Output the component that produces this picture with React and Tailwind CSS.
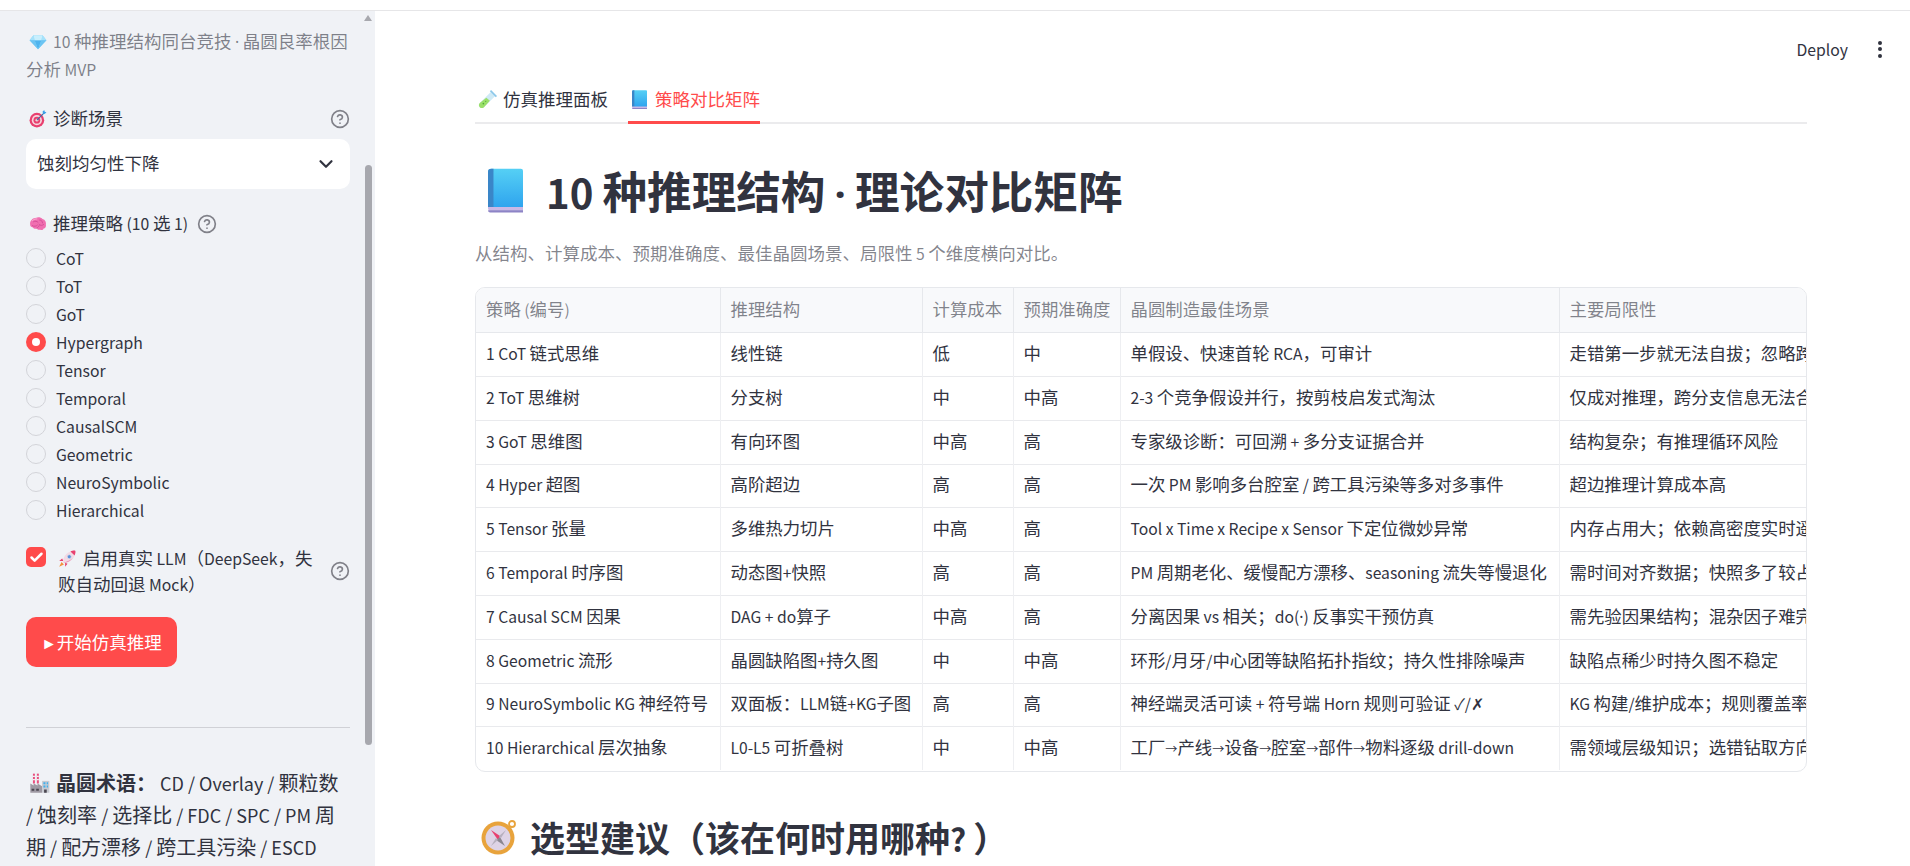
import React from "react";
import { CircleHelp, ChevronDown, Check } from "lucide-react";

const T = ({ children }) =>
  String(children)
    .split(/([\u0000-\u007f✓✗►]+|·|→)/)
    .map((part, i) => {
      if (i % 2 === 0) return part;
      if (part === "·")
        return (
          <span key={i} className="font-['Noto_Sans',sans-serif] text-[0.9em] leading-none">
            {part}
          </span>
        );
      if (part === "→")
        return (
          <span key={i} className="text-[0.7em] leading-none">
            {part}
          </span>
        );
      return (
        <span key={i} className="text-[0.9em] leading-none">
          {part}
        </span>
      );
    });

const Diamond = ({ className }) => (
  <svg viewBox="0 0 32 32" className={className}>
    <path d="M8 4h16l7 9-15 16L1 13z" fill="#7fd0f7" />
    <path d="M8 4l-7 9h9zM24 4l7 9h-9z" fill="#a5e2fb" />
    <path d="M10 13h12l-6 16z" fill="#4fb4ee" />
    <path d="M8 4h16l-2 9H10z" fill="#c9effd" />
    <path d="M1 13h9l6 16zM31 13h-9l-6 16z" fill="#6cc4f2" />
  </svg>
);
const Target = ({ className }) => (
  <svg viewBox="0 0 32 32" className={className}>
    <circle cx="14" cy="18" r="13" fill="#e8406f" />
    <circle cx="14" cy="18" r="9" fill="#f7d5dd" />
    <circle cx="14" cy="18" r="6" fill="#e8406f" />
    <circle cx="14" cy="18" r="2.5" fill="#f7d5dd" />
    <path d="M14 18L27 5" stroke="#3a6ea8" strokeWidth="2" />
    <path d="M24 3l1 3 3 1 3-3-3-1-1-3z" fill="#3aa0ea" />
  </svg>
);
const Brain = ({ className }) => (
  <svg viewBox="0 0 32 32" className={className}>
    <path d="M2 17C1 10 7 5 13 5c2-2 9-1 11 2 5 1 7 6 6 10 1 4-1 7-4 7-1 3-4 3-6 2-3 1-5 0-6-2-3 1-6 0-7-2-3 0-5-2-5-5z" fill="#f06fb0" />
    <path d="M8 12c3-2 6-1 8 1M19 9c3 0 5 2 5 5M6 19c3 2 7 1 9-1M18 17c2 2 6 2 8 0M14 23c2-1 3-2 4-4" stroke="#d34b95" strokeWidth="1.6" fill="none" strokeLinecap="round" />
    <path d="M6 10c3-3 6-3 8-3" stroke="#fbb3d6" strokeWidth="1.6" fill="none" strokeLinecap="round" />
  </svg>
);
const Rocket = ({ className }) => (
  <svg viewBox="0 0 32 32" className={className}>
    <path d="M6 22l-4 8 8-4z" fill="#f4903c" />
    <path d="M7 16l-5 4 7 0zM16 25l-4 5 0-7z" fill="#e8406f" />
    <path d="M9 23c-2-5 2-15 12-19 3-1 7-2 8-1 1 1 0 5-1 8-4 10-14 14-19 12z" fill="#f3d9e4" />
    <path d="M21 4c3-1 7-2 8-1 1 1 0 5-1 8z" fill="#e8406f" />
    <circle cx="19" cy="13" r="3.4" fill="#5b8fd8" stroke="#d9dfe8" strokeWidth="1.3" />
    <path d="M9 23c4 1 12-2 16-8-5 4-11 7-16 8z" fill="#e58bb0" />
  </svg>
);
const Factory = ({ className }) => (
  <svg viewBox="0 0 32 32" className={className}>
    <rect x="6" y="1" width="3" height="15" fill="#e8507f" />
    <rect x="12" y="1" width="3" height="15" fill="#e8507f" />
    <path d="M6 4h3v2H6zM12 4h3v2h-3zM6 9h3v2H6zM12 9h3v2h-3z" fill="#f2f2f4" />
    <path d="M2 30V16l5 3 0-3 6 3 0-3 7 4v10z" fill="#9e99a3" />
    <rect x="20" y="12" width="11" height="18" fill="#c6c9d1" />
    <path d="M22 14h3v3h-3zM27 14h2v3h-2zM22 19h3v3h-3zM27 19h2v3h-2z" fill="#3fb0ee" />
    <path d="M4 24h4v3H4zM11 24h4v3h-4zM23 25h4v5h-4z" fill="#4a4650" />
  </svg>
);
const TestTube = ({ className }) => (
  <svg viewBox="0 0 32 32" className={className}>
    <path d="M22 3l7 7L10 29c-2 2-5 2-7 0s-2-5 0-7z" fill="#cfeaf6" />
    <path d="M14 13l6 5-10 11c-2 2-5 2-7 0s-2-5 0-7z" fill="#9be06a" />
    <circle cx="9" cy="23" r="1.4" fill="#4fa83c" />
    <circle cx="13" cy="19" r="1" fill="#4fa83c" />
    <path d="M20 2l10 10 2-2L22 0z" fill="#8cc8ea" />
  </svg>
);
const Book = ({ className }) => (
  <svg viewBox="0 0 32 40" className={className}>
    <defs>
      <linearGradient id="bk" x1="0" y1="0" x2="0" y2="1">
        <stop offset="0" stopColor="#55d0f5" />
        <stop offset="1" stopColor="#2ea3ee" />
      </linearGradient>
    </defs>
    <path d="M3 0h27a2 2 0 0 1 2 2v34H0V3a3 3 0 0 1 3-3z" fill="url(#bk)" />
    <path d="M0 3a3 3 0 0 1 3-3h2v36H0z" fill="#3a86c8" />
    <path d="M0 35h32v3.5H2.5A2.5 2.5 0 0 1 0 36z" fill="#c9b8e6" />
    <path d="M0 38h32v2H2a2 2 0 0 1-2-2z" fill="#8d84c6" />
  </svg>
);
const Compass = ({ className }) => (
  <svg viewBox="0 0 36 36" className={className}>
    <circle cx="31" cy="5" r="3" fill="none" stroke="#e8a33c" strokeWidth="1.8" />
    <circle cx="17" cy="19" r="16.5" fill="#e8a33c" />
    <circle cx="17" cy="19" r="12.5" fill="#ded3e6" />
    <path d="M10 11l9 6-2 4z" fill="#e8406f" />
    <path d="M24 27l-9-6 4-3z" fill="#8a8690" />
    <path d="M25 11l-7 6 2 2zM10 27l7-6-2-2z" fill="#b7b0bf" />
  </svg>
);

const Help = ({ className = "" }) => (
  <CircleHelp size={20} strokeWidth={2} className={`text-[#808189] shrink-0 ${className}`} />
);

const strategies = ["CoT", "ToT", "GoT", "Hypergraph", "Tensor", "Temporal", "CausalSCM", "Geometric", "NeuroSymbolic", "Hierarchical"];

const headers = ["策略 (编号)", "推理结构", "计算成本", "预期准确度", "晶圆制造最佳场景", "主要局限性"];
const rows = [
  ["1 CoT 链式思维", "线性链", "低", "中", "单假设、快速首轮 RCA\uFF0C可审计", "走错第一步就无法自拔\uFF1B忽略跨分支证据"],
  ["2 ToT 思维树", "分支树", "中", "中高", "2-3 个竞争假设并行\uFF0C按剪枝启发式淘汰", "仅成对推理\uFF0C跨分支信息无法合并"],
  ["3 GoT 思维图", "有向环图", "中高", "高", "专家级诊断\uFF1A可回溯 + 多分支证据合并", "结构复杂\uFF1B有推理循环风险"],
  ["4 Hyper 超图", "高阶超边", "高", "高", "一次 PM 影响多台腔室 / 跨工具污染等多对多事件", "超边推理计算成本高"],
  ["5 Tensor 张量", "多维热力切片", "中高", "高", "Tool x Time x Recipe x Sensor 下定位微妙异常", "内存占用大\uFF1B依赖高密度实时遥测数据"],
  ["6 Temporal 时序图", "动态图+快照", "高", "高", "PM 周期老化、缓慢配方漂移、seasoning 流失等慢退化", "需时间对齐数据\uFF1B快照多了较占存储"],
  ["7 Causal SCM 因果", "DAG + do算子", "中高", "高", "分离因果 vs 相关\uFF1Bdo(·) 反事实干预仿真", "需先验因果结构\uFF1B混杂因子难完全排除"],
  ["8 Geometric 流形", "晶圆缺陷图+持久图", "中", "中高", "环形/月牙/中心团等缺陷拓扑指纹\uFF1B持久性排除噪声", "缺陷点稀少时持久图不稳定"],
  ["9 NeuroSymbolic KG 神经符号", "双面板\uFF1ALLM链+KG子图", "高", "高", "神经端灵活可读 + 符号端 Horn 规则可验证 ✓/✗", "KG 构建/维护成本\uFF1B规则覆盖率有限"],
  ["10 Hierarchical 层次抽象", "L0-L5 可折叠树", "中", "中高", "工厂→产线→设备→腔室→部件→物料逐级 drill-down", "需领域层级知识\uFF1B选错钻取方向代价大"],
];

export default function App() {
  return (
    <div className="h-[866px] w-[1910px] overflow-hidden flex flex-col bg-white text-[#31333f] font-['Noto_Sans_CJK_SC',sans-serif] text-[17.5px]">
      <div className="h-[11px] shrink-0 bg-white border-b border-[#e6e6e8]" />
      <div className="flex flex-1 min-h-0">
        <aside className="relative w-[375px] shrink-0 bg-[#f0f2f6] overflow-hidden pl-[26px] pr-[25px] pt-[16px]">
          <p className="leading-[28px] text-[#31333f99] mb-[23px]">
            <Diamond className="inline-block w-[18px] h-[18px] ml-[3px] mr-[6px] align-[-3px]" />
            <T>10 种推理结构同台竞技 · 晶圆良率根因分析 MVP</T>
          </p>

          <div className="h-[26px] flex items-center justify-between leading-[26px]">
            <span className="flex items-center">
              <Target className="w-[18px] h-[18px] ml-[3px] mr-[6px]" />
              <span className="pb-[2px]">诊断场景</span>
            </span>
            <Help />
          </div>
          <div className="mt-[7px] h-[50px] rounded-[10px] bg-white flex items-center justify-between pl-[11px] pr-[13px]">
            <span className="pb-[2px]">蚀刻均匀性下降</span>
            <ChevronDown size={22} strokeWidth={2.4} />
          </div>

          <div className="mt-[22px] h-[26px] flex items-center leading-[26px]">
            <Brain className="w-[18px] h-[18px] ml-[3px] mr-[6px]" />
            <span className="pb-[2px]"><T>推理策略 (10 选 1)</T></span>
            <Help className="ml-[9px]" />
          </div>

          <div className="mt-[7px] flex flex-col">
            {strategies.map((s) => {
              const on = s === "Hypergraph";
              return (
                <div key={s} className="h-[28px] flex items-center">
                  <span className={`w-[20px] h-[20px] rounded-full flex items-center justify-center shrink-0 ${on ? "bg-[#ff4b4b]" : "border-[1.5px] border-[#d3d4d9]"}`}>
                    {on && <span className="w-[8px] h-[8px] rounded-full bg-white" />}
                  </span>
                  <span className="ml-[10px] text-[#31333f]"><T>{s}</T></span>
                </div>
              );
            })}
          </div>

          <div className="mt-[21px] flex items-center">
            <div className="flex items-start flex-1">
              <span className="mt-[2px] w-[20px] h-[20px] rounded-[5px] bg-[#ff4b4b] flex items-center justify-center shrink-0">
                <Check size={15} strokeWidth={4} className="text-white" />
              </span>
              <p className="ml-[12px] leading-[26px] w-[260px]">
                <Rocket className="inline-block w-[19px] h-[19px] mr-[6px] align-[-3px]" />
                <T>{"启用真实 LLM\uFF08DeepSeek\uFF0C失败自动回退 Mock\uFF09"}</T>
              </p>
            </div>
            <Help />
          </div>

          <button className="mt-[20px] h-[50px] w-[151px] rounded-[10px] bg-[#ff4b4b] text-white flex items-center justify-center">
            <span><T>►</T>开始仿真推理</span>
          </button>

          <hr className="mt-[60px] border-0 h-px bg-[#d0d1d6]" />

          <p className="mt-[39px] mr-[4px] text-[20px] leading-[32px]">
            <Factory className="inline-block w-[21px] h-[21px] ml-[3px] mr-[6px] align-[-3px]" />
            <strong className="font-bold">{"晶圆术语\uFF1A"}</strong>
            <T>{" CD / Overlay / 颗粒数 / 蚀刻率 / 选择比 / FDC / SPC / PM 周期 / 配方漂移 / 跨工具污染 / ESCD"}</T>
          </p>

          {/* overlay scrollbar */}
          <div className="absolute right-[3px] top-[4px] w-0 h-0 border-x-[4px] border-x-transparent border-b-[6px] border-b-[#a7a8ae]" />
          <div className="absolute right-[3px] top-[154px] w-[7px] h-[580px] rounded-[4px] bg-[#a7a8ae]" />
        </aside>

        <main className="flex-1 min-w-0 overflow-hidden">
          <div className="h-[76px] flex items-center justify-end pr-[26px]">
            <span className="mr-[30px]"><T>Deploy</T></span>
            <span className="flex flex-col gap-[2.5px] mr-[2px]">
              <i className="block w-[4px] h-[4px] rounded-full bg-[#31333f]" />
              <i className="block w-[4px] h-[4px] rounded-full bg-[#31333f]" />
              <i className="block w-[4px] h-[4px] rounded-full bg-[#31333f]" />
            </span>
          </div>

          <div className="pl-[100px] pr-[103px]">
            <div className="h-[37px] flex border-b-2 border-[#ebebed]">
              <div className="h-[37px] flex items-start leading-[24px] pl-[3px] pr-[20px]">
                <TestTube className="w-[19px] h-[19px] mt-[3px] mr-[6px]" />
                仿真推理面板
              </div>
              <div className="h-[37px] flex items-start leading-[24px] text-[#ff4b4b] border-b-[3px] border-[#ff4b4b] w-[132px] pl-[4px]">
                <Book className="w-[15px] h-[19px] mt-[3px] mr-[8px]" />
                策略对比矩阵
              </div>
            </div>

            <h1 className="mt-[38px] mb-[21px] text-[44.6px] leading-[56px] font-bold flex items-center whitespace-nowrap">
              <Book className="w-[35px] h-[45px] ml-[13px] mr-[23px]" />
              <span><T>10 种推理结构 · 理论对比矩阵</T></span>
            </h1>
            <p className="leading-[28px] text-[#31333f99]">
              <T>从结构、计算成本、预期准确度、最佳晶圆场景、局限性 5 个维度横向对比。</T>
            </p>

            <div className="mt-[20px] w-[1332px] h-[485px] rounded-[10px] border border-[#e6e8ec] overflow-hidden">
              <table className="table-fixed border-collapse w-[1500px] text-[17.4px]">
                <colgroup>
                  <col className="w-[244px]" />
                  <col className="w-[202px]" />
                  <col className="w-[91px]" />
                  <col className="w-[107px]" />
                  <col className="w-[439px]" />
                  <col className="w-[417px]" />
                </colgroup>
                <thead>
                  <tr className="h-[44px] bg-[#f8f9fb] border-b border-[#e6e8ec]">
                    {headers.map((h, i) => (
                      <th key={h} className={`font-normal text-left pl-[10px] pb-[2px] text-[#31333f99] whitespace-nowrap overflow-hidden ${i < 5 ? "border-r border-[#e6e8ec]" : ""}`}>
                        <T>{h}</T>
                      </th>
                    ))}
                  </tr>
                </thead>
                <tbody>
                  {rows.map((r, ri) => (
                    <tr key={ri} className={`${ri === 3 || ri === 8 ? "h-[43px]" : "h-[44px]"} ${ri < 9 ? "border-b border-[#e9eaed]" : ""}`}>
                      {r.map((c, i) => (
                        <td key={i} className={`pl-[10px] pb-[2px] whitespace-nowrap overflow-hidden ${i < 5 ? "border-r border-[#eeeff2]" : ""}`}>
                          <T>{c}</T>
                        </td>
                      ))}
                    </tr>
                  ))}
                </tbody>
              </table>
            </div>

            <h2 className="mt-[43px] text-[35px] leading-[44px] font-bold flex items-center whitespace-nowrap">
              <Compass className="w-[36px] h-[36px] ml-[6px] mr-[13px]" />
              <span><T>{"选型建议\uFF08该在何时用哪种? \uFF09"}</T></span>
            </h2>
          </div>
        </main>
      </div>
    </div>
  );
}
